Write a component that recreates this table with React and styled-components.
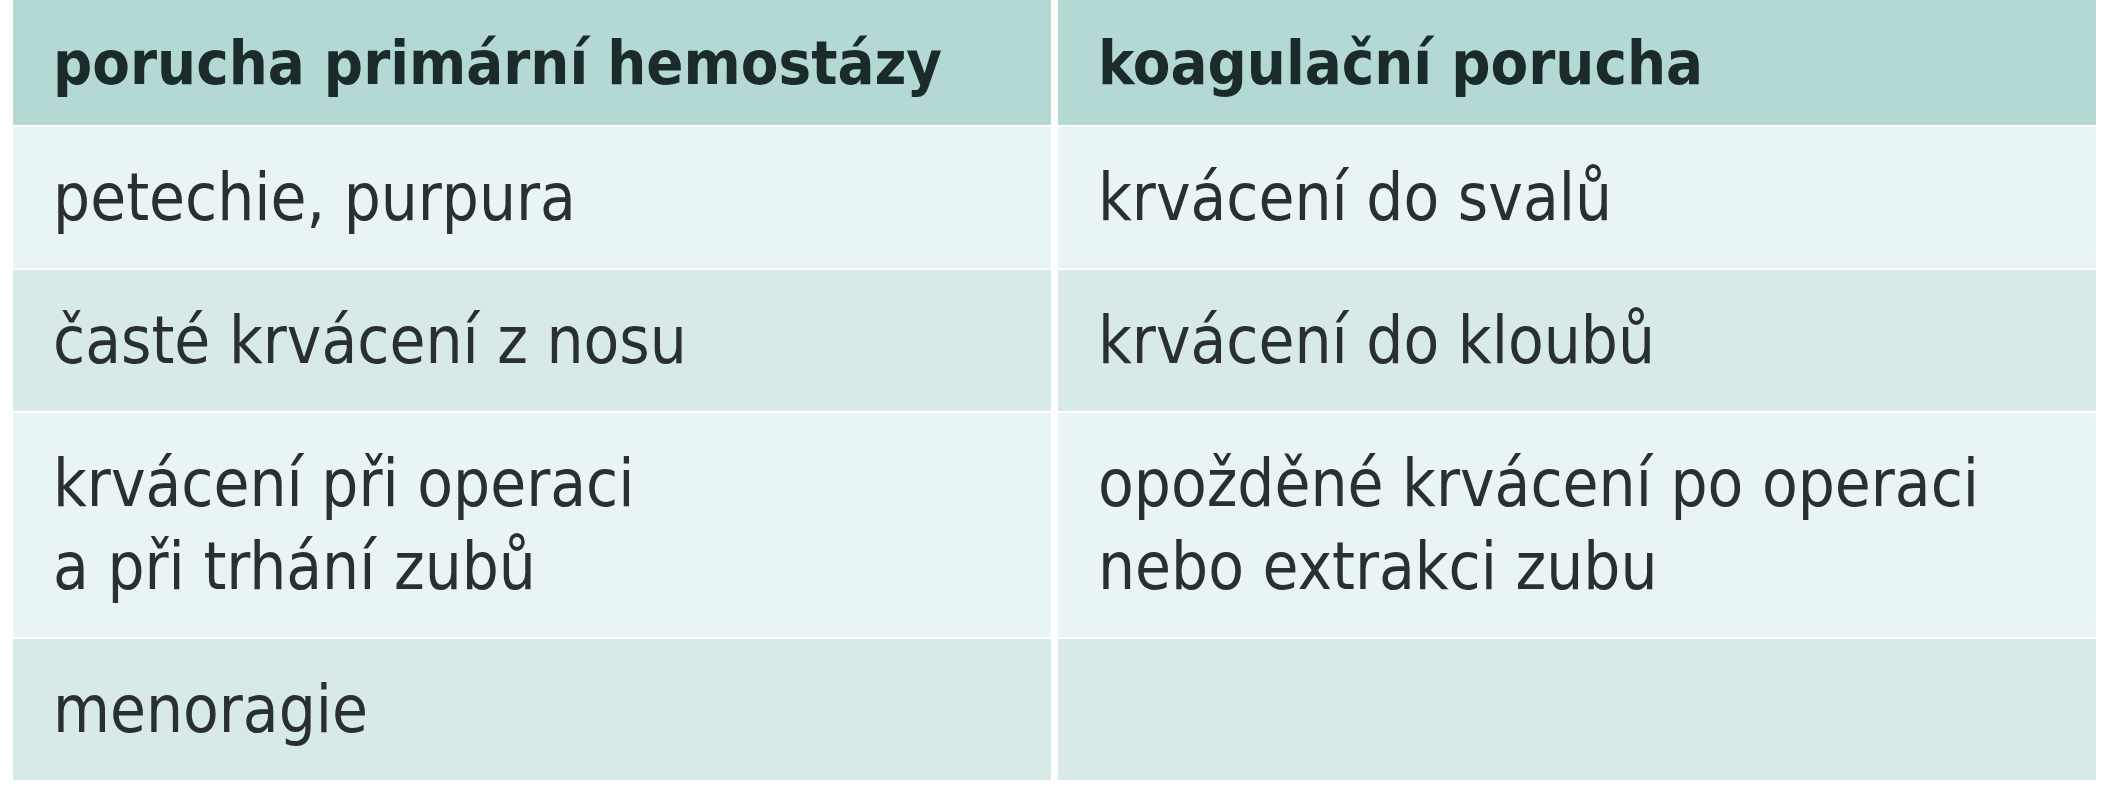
import styled, { createGlobalStyle } from "styled-components";

const GlobalStyle = createGlobalStyle`
  body {
    margin: 0;
    background: #ffffff;
    font-family: "DejaVu Sans Condensed", "DejaVu Sans", "Liberation Sans", sans-serif;
  }
`;

const Page = styled.div`
  padding: 0 20px 0 13px;
`;

const Table = styled.div`
  display: grid;
  grid-template-columns: 1fr 1fr;
  column-gap: 7px;
  row-gap: 2px;
  background: #ffffff;
`;

const HeadCell = styled.div`
  background: #b4d9d4;
  color: #1b2a2a;
  font-size: 61px;
  font-weight: bold;
  line-height: 85px;
  padding: 20px 40px;
  white-space: nowrap;
`;

const Cell = styled.div`
  background: ${(p) => (p.$even ? "#d8eae8" : "#e9f5f4")};
  color: #2a3031;
  font-size: 65px;
  line-height: 83px;
  padding: 29px 40px;
  white-space: nowrap;
`;

const rows = [
  ["petechie, purpura", "krvácení do svalů"],
  ["časté krvácení z nosu", "krvácení do kloubů"],
  [
    ["krvácení při operaci", "a při trhání zubů"],
    ["opožděné krvácení po operaci", "nebo extrakci zubu"],
  ],
  ["menoragie", ""],
];

function Lines({ text }) {
  if (!Array.isArray(text)) return text;
  return text.map((line, i) => (
    <div key={i}>{line}</div>
  ));
}

export default function App() {
  return (
    <Page>
      <GlobalStyle />
      <Table>
        <HeadCell>porucha primární hemostázy</HeadCell>
        <HeadCell>koagulační porucha</HeadCell>
        {rows.map((row, i) =>
          row.map((text, j) => (
            <Cell key={`${i}-${j}`} $even={i % 2 === 1}>
              <Lines text={text} />
            </Cell>
          ))
        )}
      </Table>
    </Page>
  );
}
